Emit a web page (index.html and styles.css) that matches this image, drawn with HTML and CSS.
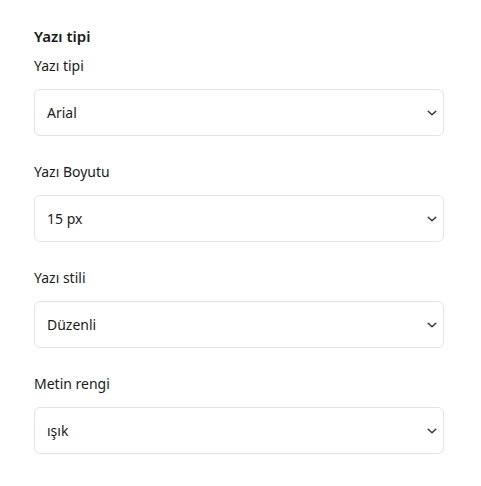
FILE: index.html
```html
<!DOCTYPE html>
<html lang="tr">
<head>
<meta charset="utf-8">
<link rel="stylesheet" href="styles.css">
</head>
<body>
<div class="panel">
  <h2 class="title">Yazı tipi</h2>
  <div class="fields">
    <div class="field">
      <div class="label">Yazı tipi</div>
      <div class="select"><span>Arial</span><svg class="chev" width="10" height="6" viewBox="0 0 10 6"><path d="M1.2 1.2l3.8 3.6 3.8-3.6" fill="none" stroke="#333" stroke-width="1.4" stroke-linecap="round" stroke-linejoin="round"/></svg></div>
    </div>
    <div class="field">
      <div class="label">Yazı Boyutu</div>
      <div class="select"><span>15 px</span><svg class="chev" width="10" height="6" viewBox="0 0 10 6"><path d="M1.2 1.2l3.8 3.6 3.8-3.6" fill="none" stroke="#333" stroke-width="1.4" stroke-linecap="round" stroke-linejoin="round"/></svg></div>
    </div>
    <div class="field">
      <div class="label">Yazı stili</div>
      <div class="select"><span>Düzenli</span><svg class="chev" width="10" height="6" viewBox="0 0 10 6"><path d="M1.2 1.2l3.8 3.6 3.8-3.6" fill="none" stroke="#333" stroke-width="1.4" stroke-linecap="round" stroke-linejoin="round"/></svg></div>
    </div>
    <div class="field">
      <div class="label">Metin rengi</div>
      <div class="select"><span>ışık</span><svg class="chev" width="10" height="6" viewBox="0 0 10 6"><path d="M1.2 1.2l3.8 3.6 3.8-3.6" fill="none" stroke="#333" stroke-width="1.4" stroke-linecap="round" stroke-linejoin="round"/></svg></div>
    </div>
  </div>
</div>
</body>
</html>
```
FILE: styles.css
```css
html, body {
  margin: 0;
  padding: 0;
  background: #ffffff;
}
body {
  font-family: "Segoe UI", "Noto Sans", "Open Sans", sans-serif;
  color: #1b1b1b;
}
.panel {
  padding: 26px 0 0 34px;
  width: 410px;
}
.title {
  margin: 0 0 10px 0;
  font-size: 15px;
  font-weight: 600;
  line-height: 20px;
}
.fields {
  display: flex;
  flex-direction: column;
  gap: 26px;
}
.field {
  display: flex;
  flex-direction: column;
  gap: 13px;
}
.label {
  font-size: 14px;
  line-height: 20px;
}
.select {
  box-sizing: border-box;
  height: 47px;
  border: 1px solid #e3e3e3;
  border-radius: 6px;
  display: flex;
  align-items: center;
  justify-content: space-between;
  padding: 0 6px 0 12px;
  font-size: 14px;
}
.chev {
  display: block;
}
```
